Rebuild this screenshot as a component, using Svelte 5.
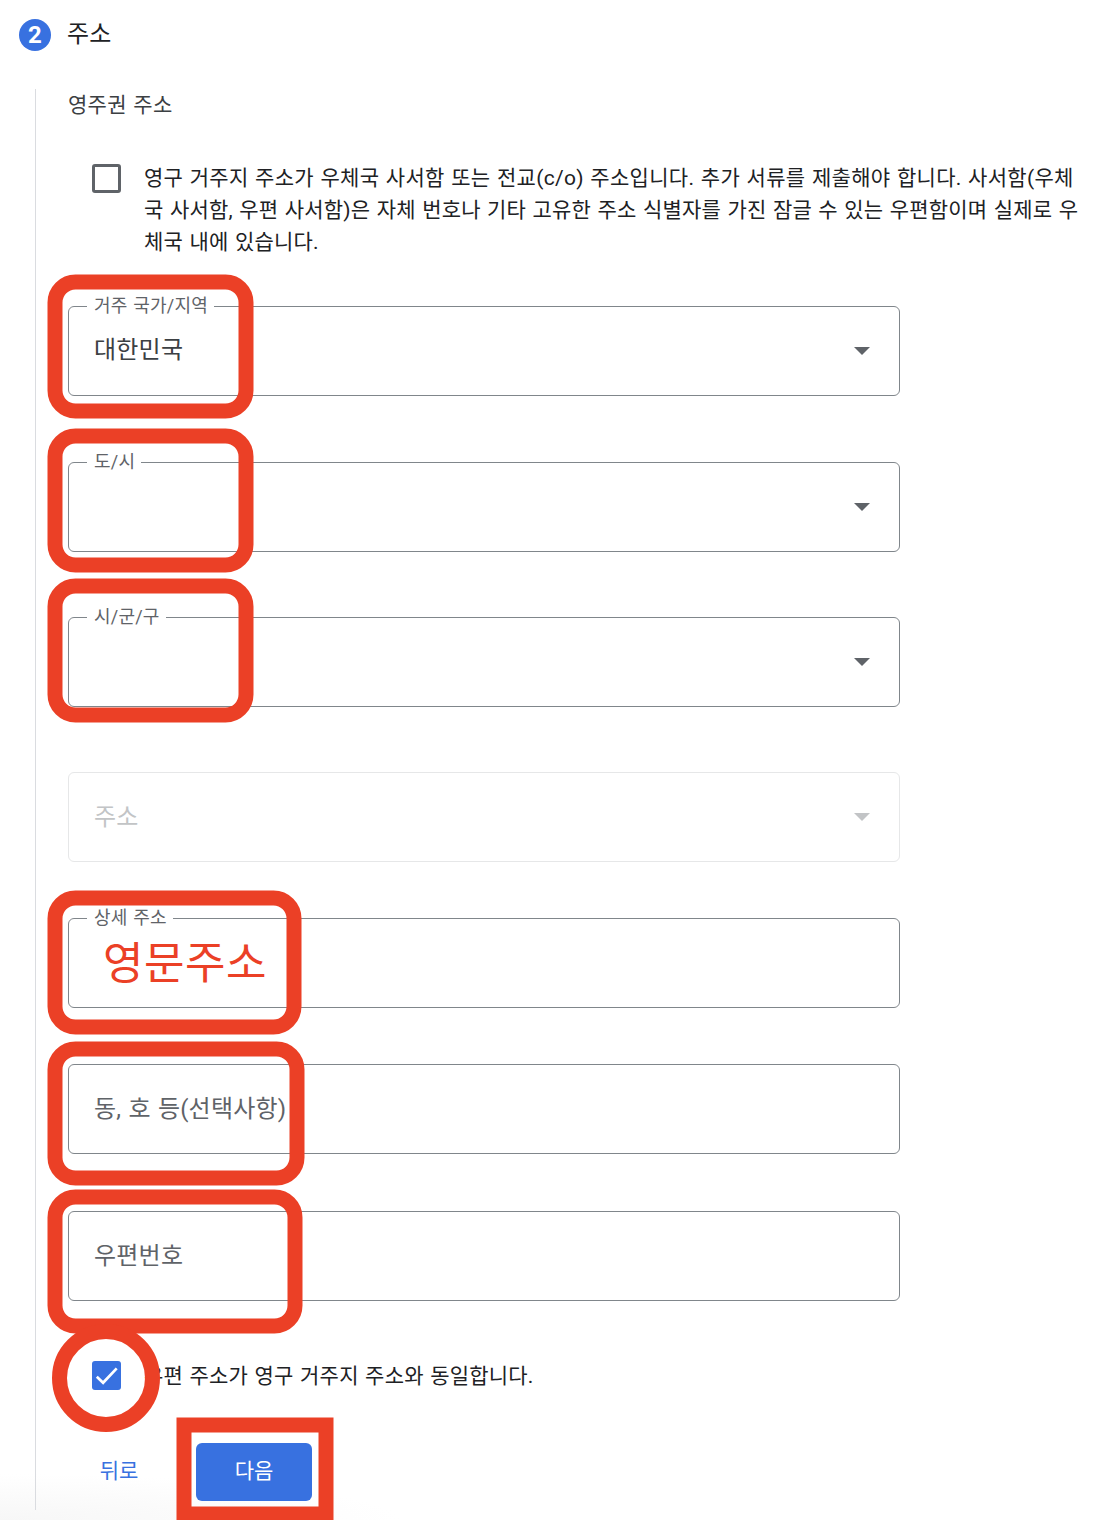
<script lang="ts">
	interface Ring {
		top: number;
		width: number;
	}

	interface Field {
		label: string;
		value?: string;
		select?: boolean;
		floating?: boolean;
		disabled?: boolean;
		note?: string;
		gap: number;
		ring?: Ring;
	}

	const fields: Field[] = [
		{ label: '거주 국가/지역', value: '대한민국', select: true, floating: true, gap: 66, ring: { top: -32, width: 206 } },
		{ label: '도/시', select: true, floating: true, gap: 65, ring: { top: -34, width: 206 } },
		{ label: '시/군/구', select: true, floating: true, gap: 65, ring: { top: -39, width: 206 } },
		{ label: '주소', select: true, disabled: true, gap: 56 },
		{ label: '상세 주소', floating: true, note: '영문주소', gap: 56, ring: { top: -28, width: 254 } },
		{ label: '동, 호 등(선택사항)', gap: 57, ring: { top: -23, width: 257 } },
		{ label: '우편번호', gap: 0, ring: { top: -22, width: 255 } }
	];

	const poBoxLines = [
		'영구 거주지 주소가 우체국 사서함 또는 전교(c/o) 주소입니다. 추가 서류를 제출해야 합니다. 사서함(우체',
		'국 사서함, 우편 사서함)은 자체 번호나 기타 고유한 주소 식별자를 가진 잠글 수 있는 우편함이며 실제로 우',
		'체국 내에 있습니다.'
	];

	let poBox = $state(false);
	let sameAddress = $state(true);
</script>

{#snippet checkbox(checked: boolean, toggle: () => void, label: string)}
	<button type="button" class="checkbox" class:checked role="checkbox" aria-checked={checked} aria-label={label} onclick={toggle}>
		{#if checked}
			<svg viewBox="0 0 29 29" width="29" height="29">
				<path d="M4.8 15.8 L11.1 21.8 L24.7 7.4" fill="none" stroke="#fff" stroke-width="2.7" />
			</svg>
		{/if}
	</button>
{/snippet}

<main class="page">
	<header class="step-header">
		<span class="step-number">2</span>
		<h2>주소</h2>
	</header>

	<section class="step-body">
		<h3>영주권 주소</h3>

		<div class="check-row po-box">
			{@render checkbox(poBox, () => (poBox = !poBox), '사서함')}
			<p>
				{#each poBoxLines as line}
					<span class="line">{line}</span>
				{/each}
			</p>
		</div>

		<div class="fields">
			{#each fields as field}
				<div class="field" class:disabled={field.disabled} style="margin-bottom: {field.gap}px">
					{#if field.floating}
						<span class="floating-label">{field.label}</span>
						<span class="value">{field.value ?? ''}</span>
					{:else}
						<span class="placeholder">{field.label}</span>
					{/if}
					{#if field.note}
						<span class="note">{field.note}</span>
					{/if}
					{#if field.select}
						<svg class="arrow" viewBox="0 0 16 8" width="16" height="8">
							<path d="M0 0h16L8 8z" fill="currentColor" />
						</svg>
					{/if}
					{#if field.ring}
						<span class="ring" style="top: {field.ring.top}px; width: {field.ring.width}px"></span>
					{/if}
				</div>
			{/each}
		</div>

		<div class="check-row same">
			{@render checkbox(sameAddress, () => (sameAddress = !sameAddress), '동일 주소')}
			<p><span class="line">우편 주소가 영구 거주지 주소와 동일합니다.</span></p>
			<span class="ring circle"></span>
		</div>

		<div class="actions">
			<button type="button" class="back">뒤로</button>
			<button type="button" class="next">다음<span class="ring square"></span></button>
		</div>
	</section>
</main>

<style>
	:global(body) {
		margin: 0;
		background: #fff;
	}

	.page {
		box-sizing: border-box;
		width: 1108px;
		height: 1520px;
		overflow: hidden;
		padding: 19px 0 0 19px;
		background: radial-gradient(ellipse 400px 46px at 0 100%, #f7f7f7, #fff) no-repeat;
		color: #202124;
		font-family: Roboto, 'Noto Sans CJK KR', sans-serif;
		font-size: 21px;
		letter-spacing: 0.22px;
		word-spacing: 1px;
	}

	.step-header {
		display: flex;
		align-items: center;
		gap: 16px;
		height: 32px;
	}

	.step-number {
		width: 32px;
		height: 32px;
		border-radius: 50%;
		background: #3871e0;
		color: #fff;
		font-size: 24px;
		font-weight: 700;
		line-height: 33px;
		text-align: center;
	}

	h2,
	h3,
	p {
		margin: 0;
		font-weight: 400;
	}

	h2 {
		font-size: 24px;
		line-height: 30px;
		padding-bottom: 2px;
	}

	.step-body {
		box-sizing: border-box;
		height: 1421px;
		margin: 38px 0 0 16px;
		padding-left: 32px;
		border-left: 1px solid #dadce0;
	}

	h3 {
		color: #3c4043;
		font-size: 21px;
		line-height: 32px;
		letter-spacing: 0.3px;
	}

	.check-row {
		position: relative;
		display: flex;
		align-items: flex-start;
		gap: 23px;
		padding-left: 24px;
	}

	.po-box {
		margin-top: 41px;
		height: 97px;
	}

	.po-box .checkbox {
		margin-top: 2px;
	}

	.line {
		display: block;
		line-height: 32px;
		white-space: nowrap;
	}

	.po-box .line {
		letter-spacing: 0.2px;
	}

	.po-box .line:first-child {
		letter-spacing: 0.3px;
	}

	.checkbox {
		box-sizing: border-box;
		flex: none;
		width: 29px;
		height: 29px;
		padding: 0;
		border: 3px solid #5f6368;
		border-radius: 3px;
		background: #fff;
	}

	.checkbox.checked {
		border: none;
		background: #3871e0;
	}

	.checkbox svg {
		display: block;
	}

	.fields {
		margin-top: 47px;
	}

	.field {
		position: relative;
		box-sizing: border-box;
		display: flex;
		align-items: center;
		justify-content: space-between;
		width: 832px;
		height: 90px;
		padding: 0 29px 0 25px;
		border: 1px solid #80868b;
		border-radius: 6px;
		color: #5f6368;
		font-size: 24px;
	}

	.field.disabled {
		border-color: #e6e7e8;
		color: #c2c4c6;
	}

	.floating-label {
		position: absolute;
		top: -15px;
		left: 18px;
		padding: 0 6px 0 7px;
		background: #fff;
		font-size: 18px;
		line-height: 28px;
	}

	.value,
	.placeholder {
		padding-bottom: 6px;
	}

	.value {
		padding-bottom: 8px;
		color: #3c4043;
	}

	.note {
		position: absolute;
		top: 13px;
		left: 34px;
		color: #eb4026;
		font-size: 44px;
		line-height: 64px;
		letter-spacing: 0.5px;
	}

	.ring {
		position: absolute;
		left: -21px;
		box-sizing: border-box;
		height: 144px;
		border: 15px solid #eb4026;
		border-radius: 28px;
		transform: translate(-0.5px, -0.5px);
		pointer-events: none;
	}

	.ring.circle {
		top: -37px;
		left: -16px;
		width: 108px;
		height: 108px;
		border-radius: 50%;
		transform: none;
	}

	.ring.square {
		top: -26px;
		left: -20px;
		width: 157px;
		height: 104px;
		border-radius: 0;
		transform: translate(0.5px, 0.5px);
	}

	.same {
		margin-top: 60px;
	}

	.same p {
		margin: -1px 0 1px;
	}

	.actions {
		display: flex;
		gap: 40px;
		margin-top: 50px;
	}

	.actions button {
		position: relative;
		height: 58px;
		padding: 0 0 2px;
		border: none;
		border-radius: 6px;
		background: none;
		font: inherit;
		line-height: 56px;
	}

	.actions .back {
		width: 102px;
		margin-right: -14px;
		color: #3871e0;
	}

	.actions .next {
		width: 116px;
		background: #3871e0;
		color: #fff;
	}
</style>
